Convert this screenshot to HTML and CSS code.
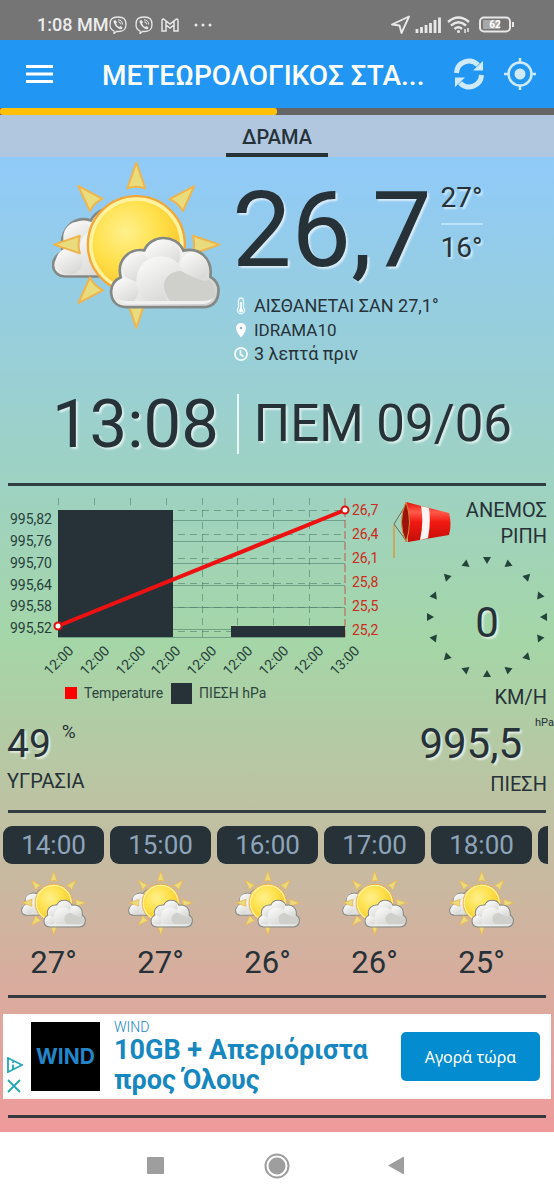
FILE: index.html
```html
<!DOCTYPE html>
<html lang="el">
<head>
  <meta charset="UTF-8" />
  <meta name="viewport" content="width=device-width, initial-scale=1.0" />
  <title>Μετεωρολογικός Σταθμός</title>
  <link rel="stylesheet" href="styles.css">
</head>
<body>
  <!-- shared weather icon -->
  <svg class="defs" width="0" height="0" aria-hidden="true">
    <defs>
      <radialGradient id="sun" cx="0.38" cy="0.35" r="0.7">
        <stop offset="0" stop-color="#fff08c" />
        <stop offset="0.55" stop-color="#ffe04a" />
        <stop offset="1" stop-color="#fbc52c" />
      </radialGradient>
      <linearGradient id="cloud" x1="0" y1="0" x2="1" y2="1">
        <stop offset="0" stop-color="#ffffff" />
        <stop offset="0.5" stop-color="#ececeb" />
        <stop offset="1" stop-color="#cacac8" />
      </linearGradient>
      <linearGradient id="puff" x1="0.2" y1="0" x2="0.8" y2="1">
        <stop offset="0" stop-color="#fafafa" />
        <stop offset="1" stop-color="#d6d6d4" />
      </linearGradient>
      <linearGradient id="sock" x1="0" y1="0" x2="0" y2="1">
        <stop offset="0" stop-color="#e0120c" />
        <stop offset="0.25" stop-color="#ff5a4a" />
        <stop offset="0.5" stop-color="#f01a12" />
        <stop offset="1" stop-color="#c40d08" />
      </linearGradient>
      <symbol id="partly-cloudy" viewBox="66 28 512 516">
        <path d="M108 381C58 380 58 322 98 307C85 240 132 195 183 212C200 180 240 165 280 180L300 381Z" fill="url(#cloud)" stroke="#858985" stroke-width="8" />
        <circle cx="146" cy="262" r="46" fill="url(#puff)" />
        <circle cx="118" cy="335" r="40" fill="url(#puff)" />
        <circle cx="206" cy="295" r="56" fill="url(#puff)" />
        <g fill="#e9dc7c" stroke="#f0b44c" stroke-width="6" stroke-linejoin="round">
          <path d="M320 38L347 115Q320 106 293 115Z" />
          <path d="M494 109L460 184Q446 158 420 148Z" />
          <path d="M570 285L490 313Q499 285 490 258Z" />
          <path d="M146 460L180 384Q194 411 220 422Z" />
          <path d="M320 536L293 455Q320 463 347 455Z" />
          <path d="M72 285L150 258Q142 285 150 311Z" />
          <path d="M145 108L218 147Q193 157 180 184Z" />
        </g>
        <circle cx="320" cy="285" r="146" fill="#fff3a0" stroke="#f3a738" stroke-width="7" />
        <circle cx="320" cy="285" r="132" fill="url(#sun)" />
        <path d="M290 473C257 473 244 450 244 425C245 403 258 390 273 383C260 335 295 295 344 302C362 255 438 250 462 303C512 292 550 328 543 382C560 392 570 408 567 430C564 460 545 473 520 473Z" fill="url(#cloud)" />
        <circle cx="320" cy="352" r="44" fill="url(#puff)" />
        <circle cx="404" cy="318" r="48" fill="url(#puff)" />
        <circle cx="495" cy="350" r="44" fill="url(#puff)" />
        <circle cx="288" cy="425" r="38" fill="url(#puff)" />
        <path d="M350 455C305 425 311 340 370 324C424 310 455 340 460 372C405 372 387 410 412 455Z" fill="url(#puff)" />
        <path d="M425 455C385 415 403 365 455 364C500 390 530 400 540 390C560 410 560 440 540 455Z" fill="#cfcfcc" />
        <path d="M262 448Q272 464 295 464H520Q545 462 554 445Q540 455 515 455H292Q275 455 262 448Z" fill="#f1f1f0" />
        <path d="M290 473C257 473 244 450 244 425C245 403 258 390 273 383C260 335 295 295 344 302C362 255 438 250 462 303C512 292 550 328 543 382C560 392 570 408 567 430C564 460 545 473 520 473Z" fill="none" stroke="#858985" stroke-width="8" />
      </symbol>
      <symbol id="viber" viewBox="0 0 18 18">
        <path d="M9 1C3 1 1 3 1 8.500C1 12 2 14 5 15V17.500L7.500 15.500H9C15 15.500 17 13.500 17 8.500C17 3 15 1 9 1Z" fill="none" stroke="#e8e8e8" stroke-width="1.300" />
        <path d="M5 4.500L6.500 4L8 6.300L7 7.500Q8 10 10.300 11L11.500 10L13.500 11.500L12.800 13Q11.500 13.800 9.500 12.500Q6 10.500 4.700 6.500Q4.300 5.200 5 4.500Z" fill="#e8e8e8" />
        <path d="M9 3.800Q13.500 4 13.500 8.500M9.300 5.800Q11.600 6 11.700 8.300" fill="none" stroke="#e8e8e8" />
      </symbol>
    </defs>
  </svg>

  <div class="statusbar">
    <span class="status-time">1:08 ΜΜ</span>
    <svg class="status-icon" width="18" height="18"><use href="#viber" /></svg>
    <svg class="status-icon gap" width="18" height="18"><use href="#viber" /></svg>
    <svg class="status-icon gap" width="18" height="14" viewBox="0 0 18 14" fill="none" stroke="#e8e8e8" stroke-width="1.500">
      <path d="M1 13V2.500Q1 1 2.500 1L9 6L15.500 1Q17 1 17 2.500V13H13V7L9 10L5 7V13ZM5 7V3M13 7V3" />
    </svg>
    <svg class="dots" width="20" height="4" viewBox="0 0 20 4" fill="#e8e8e8"><circle cx="3" cy="2" r="1.500" /><circle cx="10" cy="2" r="1.500" /><circle cx="17" cy="2" r="1.500" /></svg>
    <svg class="status-right" width="124" height="20" viewBox="0 0 124 20" fill="none" stroke="#e8e8e8">
      <path d="M2 9.500L19 1.500L11.500 18L9.500 10.500Z" stroke-width="1.900" stroke-linejoin="round" />
      <path d="M27 14V18M31.500 12V18M36 10V18M40.500 8V18M45 5V18M49.500 2.500V18" stroke-width="2.800" />
      <path d="M58 7Q68.500 -2 79 7M61 10.500Q68.500 4 76 10.500M64.500 14Q68.500 10.500 72 14" stroke-width="2.400" />
      <circle cx="68.500" cy="16.500" r="1.500" fill="#e8e8e8" stroke="none" />
      <path d="M75 14V18M78 13V17" stroke-width="1.500" />
      <rect x="90" y="2.500" width="30" height="14" rx="4" stroke-width="2" />
      <path d="M93 5H110V14H93Z" fill="#a8a8a8" stroke="none" />
      <path d="M123 7V12" stroke-width="2" />
      <text class="battery" x="105" y="13" text-anchor="middle">62</text>
    </svg>
  </div>

  <header class="appbar">
    <button class="icon-btn menu" aria-label="Μενού">
      <svg width="27" height="20" viewBox="0 0 27 20" stroke="#fff" stroke-width="3"><path d="M0 2.500H27M0 10H27M0 17.500H27" /></svg>
    </button>
    <h1>ΜΕΤΕΩΡΟΛΟΓΙΚΟΣ ΣΤΑ...</h1>
    <button class="icon-btn" aria-label="Ανανέωση">
      <svg width="32" height="32" viewBox="0 0 32 32" fill="none" stroke="#cfeaff" stroke-width="5">
        <path d="M3.500 15A12.500 12.500 0 0 1 25 7M28.500 17A12.500 12.500 0 0 1 7 25" />
        <path d="M30 3V12.500H20ZM2 29V19.500H12Z" fill="#cfeaff" stroke="none" />
      </svg>
    </button>
    <button class="icon-btn" aria-label="Τοποθεσία">
      <svg width="32" height="32" viewBox="0 0 32 32" fill="none" stroke="#cfeaff" stroke-width="2.500">
        <circle cx="16" cy="16" r="11.500" />
        <path d="M16 0V5M16 27V32M0 16H5M27 16H32" />
        <circle cx="16" cy="16" r="5.500" fill="#cfeaff" stroke="none" />
      </svg>
    </button>
  </header>
  <div class="progress"><div class="progress-bar" style="width: 50%"></div></div>
  <nav class="tabs"><button class="tab">ΔΡΑΜΑ</button></nav>

  <main class="weather">
    <section class="current">
      <svg class="current-icon" width="170" height="172"><use href="#partly-cloudy" /></svg>
      <div>
        <div class="temps">
          <span class="temp">26,7</span>
          <div class="range">
            <span>27°</span>
            <span>16°</span>
          </div>
        </div>
        <ul class="info">
          <li>
            <svg width="14" height="18" viewBox="0 0 14 18" fill="none" stroke="#e9f6fb" stroke-width="1.300"><path d="M4.500 10.500V4Q4.500 1 7 1T9.500 4V10.500A3.600 3.600 0 1 1 4.500 10.500Z" /><path d="M7 5V13" stroke-width="2" /><circle cx="7" cy="13.500" r="2" fill="#fff" stroke="none" /></svg>
            ΑΙΣΘΑΝΕΤΑΙ ΣΑΝ 27,1°
          </li>
          <li class="station">
            <svg width="14" height="16" viewBox="0 0 14 16"><path d="M7 15.500Q2 9.500 2 6A5 5 0 0 1 12 6Q12 9.500 7 15.500Z" fill="#fff" /><circle cx="7" cy="6" r="1.300" fill="#8db9c6" /></svg>
            IDRAMA10
          </li>
          <li>
            <svg width="14" height="14" viewBox="0 0 14 14" fill="none" stroke="#f4fbfd" stroke-width="1.800"><circle cx="7" cy="7" r="6.100" /><path d="M6.500 3V7.500L9.500 9.500" /></svg>
            3 λεπτά πριν
          </li>
        </ul>
      </div>
    </section>

    <section class="clock">
      <span class="time">13:08</span>
      <span class="date">ΠΕΜ 09/06</span>
    </section>
    <hr>

    <section class="middle">
      <figure class="chart">
        <svg viewBox="0 0 392 190">
          <g stroke="#4f7f6a" stroke-opacity="0.6" stroke-width="1" shape-rendering="crispEdges">
            <path d="M58 33H345M58 54H345M58 76H345M58 98H345M58 120H345M58 142H345M58 150H345" />
            <path stroke-dasharray="7 5" d="M58 23H345M58 47H345M58 71H345M58 96H345M58 120H345M58 144H345" />
            <path stroke-dasharray="7 5" d="M58 11V150M94 11V150M130 11V150M166 11V150M202 11V150M237 11V150M273 11V150M309 11V150" />
          </g>
          <path d="M345 11V150" stroke="#c05a4a" stroke-dasharray="8 3" />
          <path d="M58 23H173V150H58ZM231 139H345V150H231Z" fill="#263238" />
          <path d="M58 139L345 23" stroke="#ee1111" stroke-width="4" />
          <g fill="#fff" stroke="#e01010" stroke-width="2"><circle cx="58" cy="139" r="3.500" /><circle cx="345" cy="23" r="3.500" /></g>
          <g class="axis" text-anchor="end">
            <text x="52" y="37">995,82</text><text x="52" y="59">995,76</text><text x="52" y="81">995,70</text>
            <text x="52" y="103">995,64</text><text x="52" y="124">995,58</text><text x="52" y="146">995,52</text>
          </g>
          <g class="axis axis-temp">
            <text x="352" y="28">26,7</text><text x="352" y="52">26,4</text><text x="352" y="76">26,1</text>
            <text x="352" y="100">25,8</text><text x="352" y="124">25,5</text><text x="352" y="148">25,2</text>
          </g>
          <g class="axis" text-anchor="middle">
            <text transform="translate(62 177) rotate(-45)">12:00</text>
            <text transform="translate(98 177) rotate(-45)">12:00</text>
            <text transform="translate(134 177) rotate(-45)">12:00</text>
            <text transform="translate(169 177) rotate(-45)">12:00</text>
            <text transform="translate(205 177) rotate(-45)">12:00</text>
            <text transform="translate(241 177) rotate(-45)">12:00</text>
            <text transform="translate(277 177) rotate(-45)">12:00</text>
            <text transform="translate(312 177) rotate(-45)">12:00</text>
            <text transform="translate(348 177) rotate(-45)">13:00</text>
          </g>
        </svg>
        <figcaption class="legend">
          <span class="swatch red"></span>Temperature
          <span class="swatch dark"></span>ΠΙΕΣΗ hPa
        </figcaption>
      </figure>

      <div class="wind">
        <div class="wind-head">
          <svg width="60" height="60" viewBox="0 0 60 60">
            <path d="M2 24V57" stroke="#caa95c" stroke-width="2" />
            <path d="M2 23L15 2M2 23L15 41" stroke="#6f6a55" stroke-width="1" />
            <path d="M14 1L57 12Q60 23 57 34L16 41Z" fill="url(#sock)" />
            <path d="M29 5L37 7Q39 22 36 37L28 39Q32 22 29 5Z" fill="#fff3f3" />
            <path d="M14 1Q21 21 14 41Q5 21 14 1Z" fill="#9c130d" stroke="#d6893a" stroke-width="1" />
          </svg>
          <div>ΑΝΕΜΟΣ<br>ΡΙΠΗ</div>
        </div>
        <div class="dial">
          <svg id="dial" width="120" height="120" viewBox="-60 -60 120 120" fill="#24433a"></svg>
          <span class="speed">0</span>
        </div>
        <div>ΚΜ/Η</div>
      </div>
    </section>

    <section class="stats">
      <div>
        <div class="stat-row"><span class="humidity">49</span><span class="percent">%</span></div>
        <div class="label">ΥΓΡΑΣΙΑ</div>
      </div>
      <div class="pressure">
        <div class="stat-row"><span class="value">995,5</span><span class="hpa">hPa</span></div>
        <div class="label">ΠΙΕΣΗ</div>
      </div>
    </section>
    <hr>

    <section class="forecast">
      <div class="hour"><div class="chip">14:00</div><svg width="66" height="66"><use href="#partly-cloudy" /></svg><span>27°</span></div>
      <div class="hour"><div class="chip">15:00</div><svg width="66" height="66"><use href="#partly-cloudy" /></svg><span>27°</span></div>
      <div class="hour"><div class="chip">16:00</div><svg width="66" height="66"><use href="#partly-cloudy" /></svg><span>26°</span></div>
      <div class="hour"><div class="chip">17:00</div><svg width="66" height="66"><use href="#partly-cloudy" /></svg><span>26°</span></div>
      <div class="hour"><div class="chip">18:00</div><svg width="66" height="66"><use href="#partly-cloudy" /></svg><span>25°</span></div>
      <div class="hour"><div class="chip"></div></div>
    </section>
    <hr>

    <aside class="ad">
      <div class="ad-marks">
        <svg width="16" height="16" viewBox="0 0 16 16" fill="none" stroke="#25a5b8" stroke-width="1.800"><path d="M1 1L15 8L1 15ZM6 7.500V12M6 4.500V6" /></svg>
        <svg width="14" height="14" viewBox="0 0 14 14" stroke="#25a5b8" stroke-width="1.800"><path d="M1 1L13 13M13 1L1 13" /></svg>
      </div>
      <div class="ad-logo">WIND</div>
      <div class="ad-text">
        <div class="ad-brand">WIND</div>
        <div class="ad-title">10GB + Απεριόριστα<br>προς Όλους</div>
      </div>
      <button class="ad-btn">Αγορά τώρα</button>
    </aside>
    <hr>
  </main>

  <nav class="navbar">
    <button aria-label="Πρόσφατα"><svg width="26" height="26" viewBox="0 0 26 26"><rect x="4" y="4" width="17" height="17" rx="1" fill="#9e9e9e" /></svg></button>
    <button aria-label="Αρχική"><svg width="26" height="26" viewBox="0 0 26 26"><circle cx="13" cy="13" r="11.500" fill="none" stroke="#9e9e9e" stroke-width="2" /><circle cx="13" cy="13" r="8.500" fill="#9e9e9e" /></svg></button>
    <button aria-label="Πίσω"><svg width="26" height="26" viewBox="0 0 26 26"><path d="M3 12.500L18 4Q19 3.500 19 4.500V20.500Q19 21.500 18 21Z" fill="#9e9e9e" /></svg></button>
  </nav>

  <script>
    // compass marks
    let marks = '';
    for (let i = 0; i < 16; i++) {
      const a = i * 22.5;
      const x = 57 * Math.sin(a * Math.PI / 180);
      const y = -57 * Math.cos(a * Math.PI / 180);
      marks += `<path d="M0 -4L4 3H-4Z" transform="translate(${x} ${y}) rotate(${180 - 3 * a})" />`;
    }
    document.getElementById('dial').innerHTML = marks;
  </script>
</body>
</html>
```

FILE: styles.css
```css
* { box-sizing: border-box; }
body { margin: 0; font-family: Roboto, "Noto Sans", sans-serif; color: #263238; background: #fff; }
button { font: inherit; border: 0; background: none; padding: 0; }
svg { display: block; flex: none; }
.defs { position: absolute; }
hr { height: 3px; margin: 0 8px; border: 0; background: #263238; opacity: 0.92; }

.statusbar { display: flex; align-items: center; height: 40px; padding: 9px 40px 0 37px; background: #757575; color: #ececec; }
.status-time { font-size: 18px; font-weight: 500; margin-right: 1px; }
.gap { margin-left: 8px; }
.dots { margin-left: 14px; }
.status-right { margin-left: auto; }
.battery { font-size: 10px; font-weight: 700; fill: #fff; stroke: none; }

.appbar { display: flex; align-items: center; height: 68px; padding: 0 18px 0 26px; background: #2196f3; color: #fff; }
.appbar h1 { flex: 1; margin: 4px 0 0 49px; font-size: 28px; line-height: 36px; font-weight: 500; white-space: nowrap; overflow: hidden; }
.icon-btn + .icon-btn { margin-left: 19px; }
.progress { height: 7px; background: #666; }
.progress-bar { height: 7px; background: #ffc107; border-radius: 3px; }
.tabs { display: flex; justify-content: center; height: 42px; background: #b0c7df; }
.tab { width: 102px; height: 42px; border-bottom: 4px solid #263238; font-size: 20px; font-weight: 500; color: #263238; padding-top: 6px; }

.weather { padding-bottom: 14px; background: linear-gradient(#90caf9, #a5d6a7, #ef9a9a); }
.temp, .range, .clock, .speed, .humidity, .value { text-shadow: 2px 2px 2px rgba(255, 255, 255, 0.65); }

.current { display: flex; gap: 10px; padding: 2px 0 0 52px; }
.temps { display: flex; align-items: flex-start; gap: 9px; padding-top: 21px; }
.temp { font-size: 106px; line-height: 100px; }
.range { font-size: 28px; line-height: 36px; }
.range span { display: block; }
.range span + span { margin-top: 7px; padding-top: 5px; border-top: 2px solid rgba(220, 240, 255, 0.6); }
.info { list-style: none; margin: 14px 0 0; padding: 0 0 0 2px; font-size: 18px; line-height: 24px; }
.info li { display: flex; align-items: center; gap: 6px; }
.info .station { font-size: 17px; }

.clock { display: flex; justify-content: center; align-items: center; padding: 28px 0 29px 10px; }
.time { font-size: 67px; line-height: 60px; padding-right: 18px; border-right: 2px solid rgba(255, 255, 255, 0.8); }
.date { font-size: 51px; line-height: 60px; padding-left: 15px; }

.middle { display: grid; grid-template-columns: minmax(0, 1fr) 155px; padding-right: 7px; }
.chart { margin: 0; padding-top: 1px; }
.axis { font-size: 14px; fill: #263f3a; }
.axis-temp { fill: #cc2a20; }
.legend { display: flex; align-items: center; height: 32px; padding-left: 65px; font-size: 14px; color: #2c463d; }
.swatch { width: 12px; height: 12px; margin-right: 7px; background: #f00; }
.swatch.dark { width: 21px; height: 21px; margin-left: 8px; background: #263238; }

.wind { padding-top: 11px; font-size: 20px; line-height: 26px; text-align: right; }
.wind-head { display: flex; justify-content: space-between; height: 60px; }
.wind-head svg { margin-top: 4px; }
.dial { display: grid; justify-content: end; align-items: center; margin-bottom: 7px; }
.dial > * { grid-area: 1 / 1; }
.speed { font-size: 42px; line-height: 44px; text-align: center; padding-top: 12px; }

.stats { display: flex; justify-content: space-between; height: 100px; padding: 10px 0 0 7px; font-size: 20px; line-height: 26px; }
.stat-row { display: flex; align-items: flex-start; line-height: 48px; }
.humidity { font-size: 39px; }
.percent { font-size: 19px; line-height: 24px; margin-left: 11px; }
.value { font-size: 42px; }
.hpa { font-size: 11px; line-height: 12px; margin: -3px 0 0 13px; }
.pressure { text-align: right; }
.pressure .label { margin-top: 3px; padding-right: 7px; }

.forecast { display: flex; gap: 6px; height: 182px; margin: 0 6px 0 3px; padding-top: 13px; overflow: hidden; }
.hour { flex: none; display: flex; flex-direction: column; align-items: center; width: 101px; font-size: 31px; line-height: 36px; }
.hour svg { margin: 6px 0 9px; }
.chip { width: 100%; height: 38px; border-radius: 9px; background: #263238; color: #8ea4ba; font-size: 26px; line-height: 38px; text-align: center; }

.ad { display: flex; align-items: center; height: 85px; margin: 16px 3px; padding: 0 11px 0 4px; background: #fff; }
.ad-marks { display: flex; flex-direction: column; gap: 6px; margin: 36px 8px 0 0; }
.ad-logo { width: 69px; height: 69px; background: #000; color: #2287c8; font: 700 21px/69px Inter, sans-serif; text-align: center; }
.ad-text { flex: 1; padding-left: 14px; color: #1787bf; white-space: nowrap; }
.ad-brand { font-size: 14px; line-height: 16px; font-weight: 300; }
.ad-title { font-size: 27px; line-height: 30px; font-weight: 700; }
.ad-btn { width: 139px; height: 49px; border-radius: 5px; background: #038ccf; color: #fff; font: 16px "Noto Sans", sans-serif; }

.navbar { display: flex; justify-content: center; align-items: center; gap: 95px; height: 67px; background: #fff; }
```
